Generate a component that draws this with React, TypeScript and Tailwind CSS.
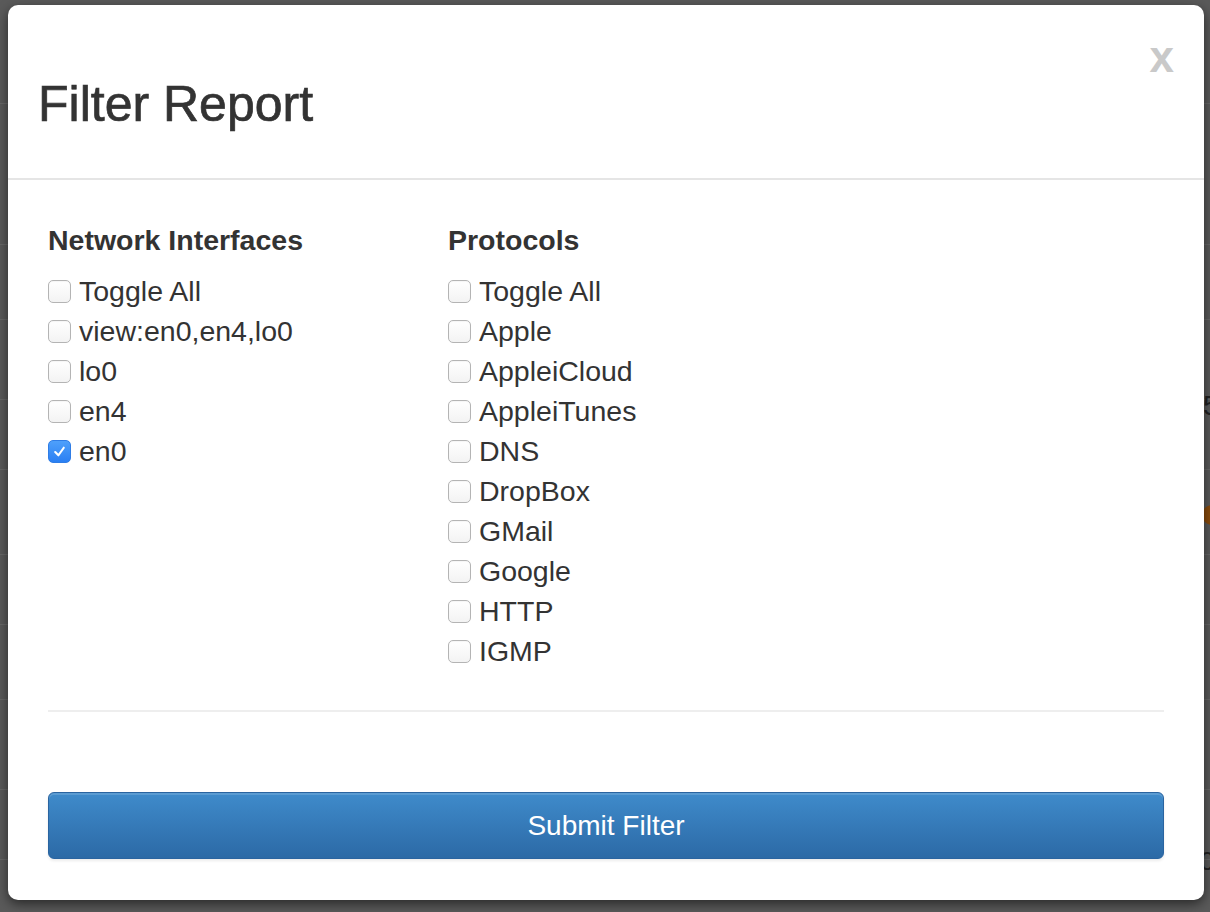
import React from "react";

const interfaces = [
  { label: "Toggle All", checked: false },
  { label: "view:en0,en4,lo0", checked: false },
  { label: "lo0", checked: false },
  { label: "en4", checked: false },
  { label: "en0", checked: true },
];

const protocols = [
  "Toggle All",
  "Apple",
  "AppleiCloud",
  "AppleiTunes",
  "DNS",
  "DropBox",
  "GMail",
  "Google",
  "HTTP",
  "IGMP",
];

function Box({ checked }: { checked: boolean }) {
  if (checked) {
    return (
      <span className="flex h-[23px] w-[23px] shrink-0 items-center justify-center rounded-[5px] border border-[#2f7de6] bg-gradient-to-b from-[#4ea0fb] to-[#2a7ff3]">
        <svg width="15" height="15" viewBox="0 0 14 14">
          <path d="M3 7.5 L6 10.5 L11 3.5" fill="none" stroke="#fff" strokeWidth="2" strokeLinecap="round" strokeLinejoin="round" />
        </svg>
      </span>
    );
  }
  return (
    <span className="h-[23px] w-[23px] shrink-0 rounded-[5px] border border-[#b4b4b4] bg-gradient-to-b from-white to-[#f3f3f3] shadow-[inset_0_1px_1px_rgba(0,0,0,0.04)]" />
  );
}

function Row({ label, checked }: { label: string; checked: boolean }) {
  return (
    <label className="flex h-[40px] items-center gap-[8px] text-[28.5px] leading-[40px] text-[#333]">
      <Box checked={checked} />
      <span>{label}</span>
    </label>
  );
}

export default function App() {
  const bgRows = [104, 245, 320, 400, 470, 555, 625, 700, 790, 860];
  return (
    <div
      className="relative h-[912px] w-[1210px] overflow-hidden bg-[#5a5a5a]"
      style={{ fontFamily: '"Liberation Sans", Arial, Helvetica, sans-serif' }}
    >
      {/* faint backdrop page lines */}
      <div className="flex flex-col">
        {bgRows.map((y, i) => (
          <div
            key={i}
            className="border-b border-[#686868]"
            style={{ height: i === 0 ? y : y - bgRows[i - 1] }}
          />
        ))}
      </div>
      <div className="absolute left-[1203px] top-[392px] text-[28px] leading-none text-[#222]">5</div>
      <div className="absolute left-[1202px] top-[505px] h-[20px] w-[20px] rounded-full bg-[#8a4b0c]" />
      <div className="absolute left-[1200px] top-[848px] text-[26px] leading-none text-[#222]">0</div>

      {/* modal */}
      <div className="absolute left-[8px] top-[5px] flex h-[895px] w-[1196px] flex-col rounded-[10px] bg-white shadow-[0_4px_12px_rgba(0,0,0,0.55)]">
        <div className="relative flex h-[175px] items-center border-b-2 border-[#e5e5e5] px-[30px]">
          <h1 className="mt-[24px] text-[50px] font-normal leading-none text-[#333] [-webkit-text-stroke:0.7px_#333]">Filter Report</h1>
          <span className="absolute right-[30px] top-[30px] text-[44px] font-bold leading-none text-[#c9c9c9]">x</span>
        </div>
        <div className="flex flex-col px-[40px] pt-[44px]">
          <div className="flex">
            <div className="flex w-[400px] flex-col">
              <h4 className="mb-[15px] text-[28.5px] font-bold leading-[32px] text-[#333]">Network Interfaces</h4>
              {interfaces.map((r) => (
                <Row key={r.label} label={r.label} checked={r.checked} />
              ))}
            </div>
            <div className="flex flex-col">
              <h4 className="mb-[15px] text-[28.5px] font-bold leading-[32px] text-[#333]">Protocols</h4>
              {protocols.map((p) => (
                <Row key={p} label={p} checked={false} />
              ))}
            </div>
          </div>
          <div className="mt-[39px] border-t-2 border-[#eeeeee]" />
          <button className="mt-[80px] flex h-[67px] w-full items-center justify-center rounded-[6px] border border-[#2a64a0] bg-gradient-to-b from-[#3f8bcb] to-[#2c6aa6] text-[28px] text-white shadow-[inset_0_2px_0_rgba(255,255,255,0.15),0_2px_3px_rgba(0,0,0,0.08)]">
            Submit Filter
          </button>
        </div>
      </div>
    </div>
  );
}
